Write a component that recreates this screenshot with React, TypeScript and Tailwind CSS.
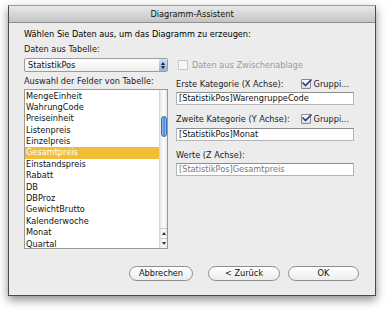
import { Check } from "lucide-react";

const fields = [
  "MengeEinheit",
  "WahrungCode",
  "Preiseinheit",
  "Listenpreis",
  "Einzelpreis",
  "Gesamtpreis",
  "Einstandspreis",
  "Rabatt",
  "DB",
  "DBProz",
  "GewichtBrutto",
  "Kalenderwoche",
  "Monat",
  "Quartal",
];

const TextField = ({ value, dim }: { value: string; dim?: boolean }) => (
  <div
    className={`h-[13px] w-[178px] border border-[#b5b5b5] border-t-[#8c8c8c] bg-white pl-[2px] leading-[11px] ${
      dim ? "text-[#777]" : "text-[#111]"
    }`}
  >
    {value}
  </div>
);

const CheckedBox = () => (
  <div className="flex items-center gap-[3px]">
    <div className="relative h-[10px] w-[10px] rounded-[1px] border border-[#8a8a8a] bg-gradient-to-b from-white to-[#dcdcdc]">
      <Check className="absolute -left-[1px] -top-[3px] h-[12px] w-[12px] text-[#1d3f8f]" strokeWidth={3.5} />
    </div>
    <span className="text-[#222]">Gruppi...</span>
  </div>
);

const PillButton = ({ label, width }: { label: string; width: string }) => (
  <button
    className={`${width} h-[15px] rounded-full border border-[#8e8e8e] bg-gradient-to-b from-white to-[#ececec] text-center leading-[13px] text-[#111]`}
  >
    {label}
  </button>
);

export default function App() {
  return (
    <div
      className="h-[310px] w-[388px] bg-white pl-[8px] pt-[5px] text-[8.2px]"
      style={{ fontFamily: '"DejaVu Sans", "Lucida Grande", sans-serif' }}
    >
      <div className="flex h-[291px] w-[368px] flex-col border border-[#4a4a4a] border-t-[#9a9a9a] bg-[#ececec] shadow-[0_4px_9px_rgba(0,0,0,0.45)]">
        {/* title bar */}
        <div className="flex h-[17px] items-center justify-center border-b border-[#8f8f8f] bg-gradient-to-b from-[#e9e9e9] to-[#c4c4c4] text-[#111]">
          Diagramm-Assistent
        </div>

        <div className="flex flex-1 flex-col pl-[15px] pr-[13px]">
          <div className="mt-[5px] h-[12px] leading-[12px] text-black">
            Wählen Sie Daten aus, um das Diagramm zu erzeugen:
          </div>
          <div className="mt-[3px] h-[12px] leading-[12px] text-[#222]">Daten aus Tabelle:</div>

          {/* popup row */}
          <div className="mt-[3px] flex h-[14px] gap-[10px]">
            <div className="flex w-[144px] items-stretch rounded-[2px] border border-[#9c9c9c] bg-gradient-to-b from-white to-[#efefef]">
              <span className="flex-1 pl-[3px] leading-[12px] text-[#111]">StatistikPos</span>
              <div className="flex w-[8px] flex-col items-center justify-center gap-[1px] rounded-r-[2px] bg-gradient-to-b from-[#cfe0f5] to-[#8fb2e0]">
                <div className="h-0 w-0 border-x-[2px] border-b-[3px] border-x-transparent border-b-[#222]" />
                <div className="h-0 w-0 border-x-[2px] border-t-[3px] border-x-transparent border-t-[#222]" />
              </div>
            </div>
            <div className="flex items-center gap-[4px]">
              <div className="h-[10px] w-[10px] rounded-[1px] border border-[#c4c4c4] bg-[#f6f6f6]" />
              <span className="text-[#9a9a9a]">Daten aus Zwischenablage</span>
            </div>
          </div>

          {/* main area */}
          <div className="mt-[3px] flex gap-[8px]">
            <div className="flex w-[144px] flex-col">
              <div className="h-[12px] leading-[12px] text-[#222]">Auswahl der Felder von Tabelle:</div>
              <div className="mt-[2px] flex h-[160px] border border-[#9a9a9a] bg-white">
                <div className="flex-1 overflow-hidden pt-[0.5px]">
                  {fields.map((f) => (
                    <div
                      key={f}
                      className={`h-[11.4px] pl-[1px] leading-[11.4px] ${
                        f === "Gesamtpreis" ? "bg-[#f2bd35] text-white" : "text-[#111]"
                      }`}
                    >
                      {f}
                    </div>
                  ))}
                </div>
                {/* scrollbar */}
                <div className="flex w-[8px] flex-col border-l border-[#d6d6d6] bg-gradient-to-r from-[#e6e6e6] via-white to-[#e6e6e6]">
                  <div className="h-[26px]" />
                  <div className="mx-auto h-[21px] w-[6px] rounded-full border border-[#3a6fb5] bg-gradient-to-r from-[#9cc3ee] via-[#3f86d9] to-[#9cc3ee]" />
                  <div className="flex-1" />
                  <div className="flex h-[10px] items-center justify-center border-t border-[#c8c8c8]">
                    <div className="h-0 w-0 border-x-[2px] border-b-[3px] border-x-transparent border-b-[#333]" />
                  </div>
                  <div className="flex h-[10px] items-center justify-center border-t border-[#c8c8c8]">
                    <div className="h-0 w-0 border-x-[2px] border-t-[3px] border-x-transparent border-t-[#333]" />
                  </div>
                </div>
              </div>
            </div>

            <div className="flex flex-col pt-[3px]">
              <div className="flex h-[12px] items-center justify-between pr-[5px]">
                <span className="text-[#222]">Erste Kategorie (X Achse):</span>
                <CheckedBox />
              </div>
              <div className="mt-[2px]">
                <TextField value="[StatistikPos]WarengruppeCode" />
              </div>
              <div className="mt-[8px] flex h-[12px] items-center justify-between pr-[5px]">
                <span className="text-[#222]">Zweite Kategorie (Y Achse):</span>
                <CheckedBox />
              </div>
              <div className="mt-[3px]">
                <TextField value="[StatistikPos]Monat" />
              </div>
              <div className="mt-[8px] flex h-[12px] items-center">
                <span className="text-[#222]">Werte (Z Achse):</span>
              </div>
              <div className="mt-[2px]">
                <TextField value="[StatistikPos]Gesamtpreis" dim />
              </div>
            </div>
          </div>

          {/* buttons */}
          <div className="mt-[17px] flex justify-end gap-[15px] pr-[3px]">
            <PillButton label="Abbrechen" width="w-[64px]" />
            <div className="flex gap-[8px]">
              <PillButton label="< Zurück" width="w-[72px]" />
              <PillButton label="OK" width="w-[71px]" />
            </div>
          </div>
        </div>
      </div>
    </div>
  );
}
